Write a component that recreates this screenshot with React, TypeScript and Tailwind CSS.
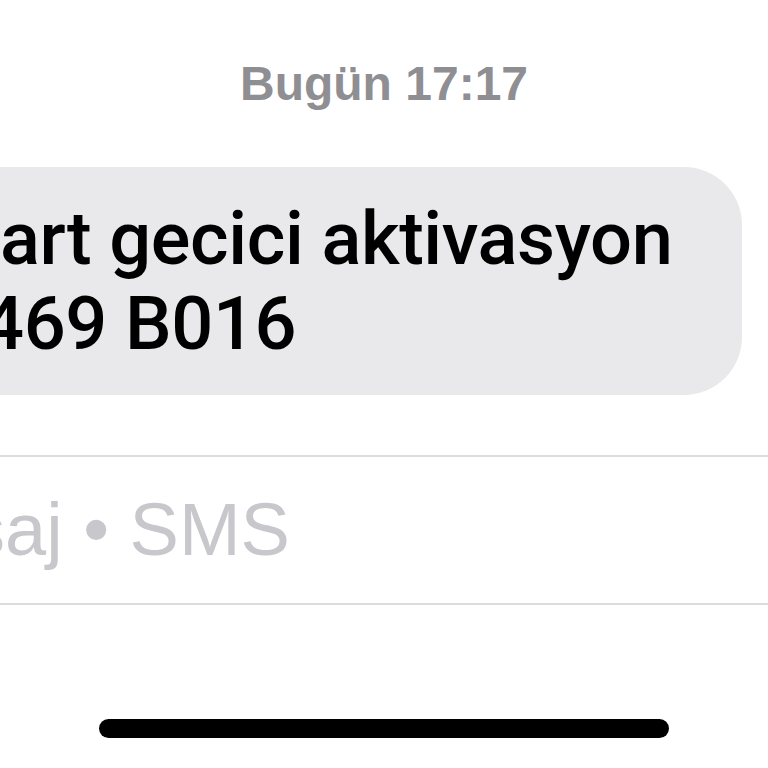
import * as React from "react"

const font = { fontFamily: '"Liberation Sans", Arial, sans-serif' }
const bubbleFont = { fontFamily: 'Roboto, "Liberation Sans", Arial, sans-serif' }

function Timestamp() {
  return (
    <div className="flex justify-center pt-[56px]">
      <p className="text-[48px] leading-[56px] font-bold text-[#8e8e93]">
        Bugün 17:17
      </p>
    </div>
  )
}

function IncomingBubble() {
  return (
    <div className="mt-[55px] flex">
      <div
        className="-ml-[80px] w-[822px] rounded-[58px] bg-[#e9e9eb] pt-[29px] pb-[29px] pl-[80px] text-[74px] leading-[85px] font-medium tracking-[-0.4px] text-black"
        style={bubbleFont}
      >
        <p className="whitespace-nowrap">art gecici aktivasyon</p>
        <p className="-ml-[18px] whitespace-nowrap">469 B016</p>
      </div>
    </div>
  )
}

function Composer() {
  return (
    <div className="mt-[60px] border-y-2 border-[#dcdcdf] pt-[30px] pb-[31px]">
      <p className="-ml-[32px] whitespace-nowrap text-[74px] leading-[85px] text-[#c7c7cc]">
        saj • SMS
      </p>
    </div>
  )
}

export default function App() {
  return (
    <main
      className="relative h-[768px] w-[768px] overflow-hidden bg-white"
      style={font}
    >
      <Timestamp />
      <IncomingBubble />
      <Composer />
      <div className="mt-[114px] flex justify-center">
        <div className="h-[19px] w-[570px] rounded-full bg-black" />
      </div>
    </main>
  )
}
